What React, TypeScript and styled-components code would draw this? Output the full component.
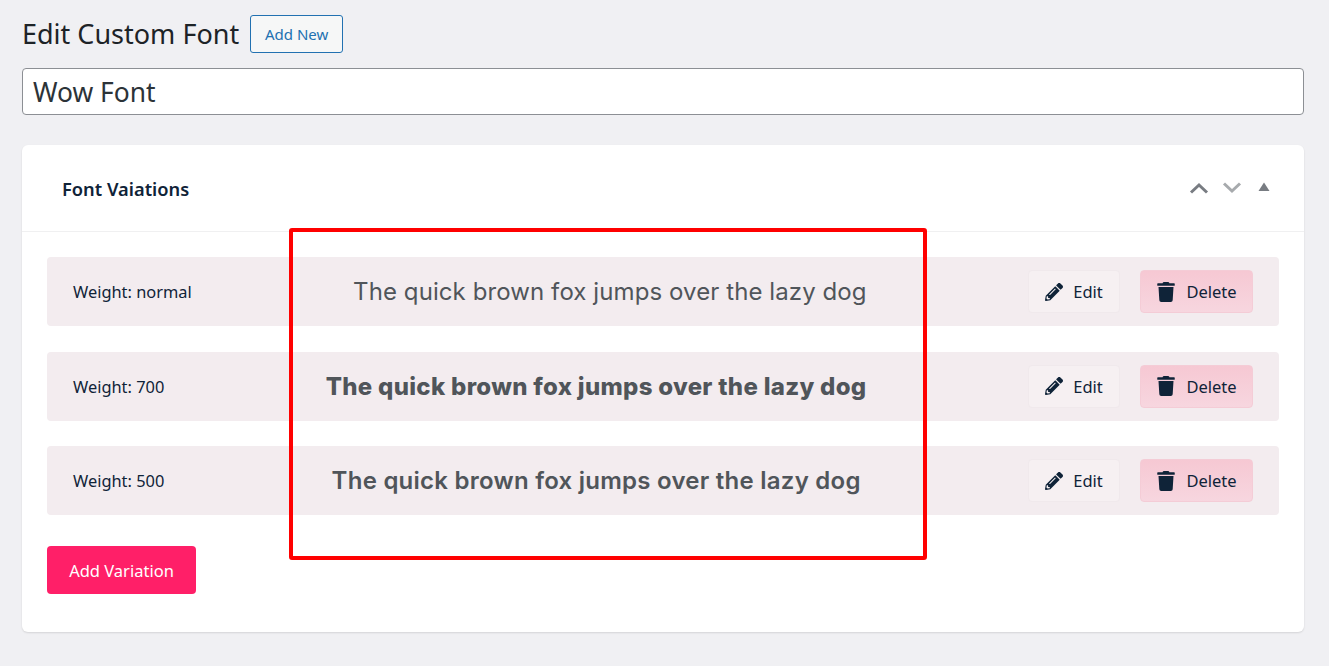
import React from 'react'
import styled, { createGlobalStyle } from 'styled-components'
import { FaPencilAlt, FaTrash } from 'react-icons/fa'

const GlobalStyle = createGlobalStyle`
    html, body {
        margin: 0;
        padding: 0;
        background: #f0f0f3;
        font-family: "Noto Sans", "Open Sans", sans-serif;
        color: #1d2327;
    }
`

const Page = styled.div`
    position: relative;
    width: 1329px;
    height: 666px;
    padding: 14px 25px 0 22px;
    box-sizing: border-box;
    overflow: hidden;
`
const TitleRow = styled.div`
    display: flex;
    align-items: center;
    gap: 11px;
    height: 39px;
`
const Title = styled.h1`
    margin: 0;
    font-size: 27px;
    font-weight: 400;
    color: #1d2327;
    line-height: 39px;
`
const AddNew = styled.button`
    height: 38px;
    width: 93px;
    padding: 0;
    border: 1px solid #2271b1;
    border-radius: 3px;
    background: #f6f7f7;
    color: #2271b1;
    font-family: inherit;
    font-size: 15px;
`
const NameInput = styled.div`
    margin-top: 15px;
    height: 47px;
    box-sizing: border-box;
    padding: 0 10px;
    display: flex;
    align-items: center;
    background: #fff;
    border: 1px solid #8c8f94;
    border-radius: 4px;
    font-size: 26.4px;
    color: #2c3338;
`
const Card = styled.section`
    margin-top: 30px;
    height: 487px;
    background: #fff;
    border-radius: 6px;
    box-shadow: 0 1px 2px rgba(0, 0, 0, 0.12);
`
const CardHeader = styled.header`
    height: 87px;
    box-sizing: border-box;
    padding: 0 34px 0 40px;
    display: flex;
    align-items: center;
    justify-content: space-between;
    border-bottom: 1px solid #f0f0f1;
`
const CardTitle = styled.h2`
    margin: 0;
    font-size: 18.3px;
    font-weight: 600;
    color: #0f2338;
`
const Handles = styled.div`
    display: flex;
    align-items: flex-start;
`
const HandleIcon = styled.svg<{ $gap: number }>`
    margin-left: ${p => p.$gap}px;
`
const CardBody = styled.div`
    padding: 25px 25px 0;
    display: flex;
    flex-direction: column;
    align-items: stretch;
    gap: 25.5px;
`
const Row = styled.div`
    height: 69px;
    box-sizing: border-box;
    padding: 0 26px;
    display: flex;
    align-items: center;
    justify-content: space-between;
    background: #f3ecef;
    border-radius: 4px;
`
const WeightLabel = styled.span`
    font-size: 16.4px;
    color: #0f2338;
`
const Sample = styled.span<{ $weight: number; $spacing: number }>`
    font-family: Inter, Roboto, sans-serif;
    font-size: 24px;
    font-weight: ${p => p.$weight};
    letter-spacing: ${p => p.$spacing}px;
    color: #50555a;
`
const Actions = styled.div`
    display: flex;
    align-items: center;
    gap: 20px;
`
const ActionButton = styled.button<{ $danger?: boolean }>`
    height: 43px;
    box-sizing: border-box;
    width: ${p => (p.$danger ? '113px' : '92px')};
    display: flex;
    align-items: center;
    justify-content: center;
    gap: 10px;
    padding: 0;
    border: 1px solid ${p => (p.$danger ? '#f4ccd6' : '#f0e9ec')};
    border-radius: 4px;
    background: ${p => (p.$danger ? 'linear-gradient(#f6c8d3, #f7d6df)' : '#f6f0f2')};
    color: #0f2338;
    font-family: inherit;
    font-size: 16.5px;
`
const AddVariation = styled.button`
    align-self: flex-start;
    margin-top: 5.5px;
    width: 149px;
    height: 48px;
    padding: 0;
    border: 0;
    border-radius: 4px;
    background: #ff1f68;
    color: #fff;
    font-family: inherit;
    font-size: 16.5px;
`
const Highlight = styled.div`
    position: absolute;
    left: 289px;
    top: 227.5px;
    width: 638px;
    height: 332px;
    box-sizing: border-box;
    border: 4px solid #f00;
    border-radius: 3px;
    pointer-events: none;
`

const variations = [
    { label: 'Weight: normal', weight: 400, spacing: 0.09 },
    { label: 'Weight: 700', weight: 800, spacing: 0.3 },
    { label: 'Weight: 500', weight: 600, spacing: 0.25 },
]

const App = () => (
    <Page>
        <GlobalStyle />
        <TitleRow>
            <Title>Edit Custom Font</Title>
            <AddNew>Add New</AddNew>
        </TitleRow>
        <NameInput>Wow Font</NameInput>
        <Card>
            <CardHeader>
                <CardTitle>Font Vaiations</CardTitle>
                <Handles>
                    <HandleIcon $gap={0} width="20" height="12" viewBox="0 0 20 12">
                        <path d="M2 10.5 10 3l8 7.5" fill="none" stroke="#787c82" strokeWidth="3" />
                    </HandleIcon>
                    <HandleIcon $gap={13} width="20" height="12" viewBox="0 0 20 12">
                        <path d="M2 1.5 10 9l8-7.5" fill="none" stroke="#a7aaad" strokeWidth="3" />
                    </HandleIcon>
                    <HandleIcon $gap={16} width="12" height="10" viewBox="0 0 12 10">
                        <path d="M6 0.5 11.5 9H0.5z" fill="#787c82" />
                    </HandleIcon>
                </Handles>
            </CardHeader>
            <CardBody>
                {variations.map(v => (
                    <Row key={v.label}>
                        <WeightLabel>{v.label}</WeightLabel>
                        <Sample $weight={v.weight} $spacing={v.spacing}>The quick brown fox jumps over the lazy dog</Sample>
                        <Actions>
                            <ActionButton>
                                <FaPencilAlt size={18} />
                                Edit
                            </ActionButton>
                            <ActionButton $danger>
                                <FaTrash size={20} />
                                Delete
                            </ActionButton>
                        </Actions>
                    </Row>
                ))}
                <AddVariation>Add Variation</AddVariation>
            </CardBody>
        </Card>
        <Highlight />
    </Page>
)

export default App
